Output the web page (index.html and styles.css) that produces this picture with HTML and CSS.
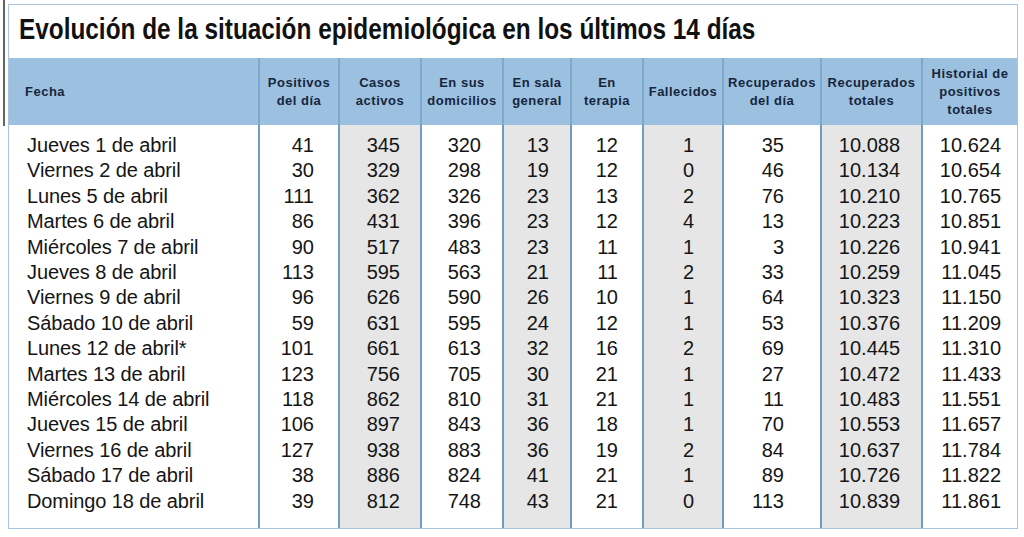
FILE: index.html
```html
<!DOCTYPE html>
<html lang="es">
<head>
<meta charset="utf-8">
<title>Evolución de la situación epidemiológica</title>
<link rel="stylesheet" href="styles.css">
</head>
<body>
<div class="page">
  <div class="edge"></div>
  <div class="card">
    <h1 class="title"><span class="title-text">Evolución de la situación epidemiológica en los últimos 14 días</span></h1>
    <table class="data">
      <colgroup>
        <col class="c-fecha">
        <col class="c-pos">
        <col class="c-casos shade">
        <col class="c-dom">
        <col class="c-sala shade">
        <col class="c-ter">
        <col class="c-fall shade">
        <col class="c-recd">
        <col class="c-rect shade">
        <col class="c-hist">
      </colgroup>
      <thead>
        <tr>
          <th class="h-fecha">Fecha</th>
          <th>Positivos<br>del día</th>
          <th>Casos<br>activos</th>
          <th>En sus<br>domicilios</th>
          <th>En sala<br>general</th>
          <th>En<br>terapia</th>
          <th>Fallecidos</th>
          <th>Recuperados<br>del día</th>
          <th>Recuperados<br>totales</th>
          <th>Historial de<br>positivos<br>totales</th>
        </tr>
      </thead>
      <tbody>
        <tr class="first"><td>Jueves 1 de abril</td><td>41</td><td>345</td><td>320</td><td>13</td><td>12</td><td>1</td><td>35</td><td>10.088</td><td>10.624</td></tr>
        <tr><td>Viernes 2 de abril</td><td>30</td><td>329</td><td>298</td><td>19</td><td>12</td><td>0</td><td>46</td><td>10.134</td><td>10.654</td></tr>
        <tr><td>Lunes 5 de abril</td><td>111</td><td>362</td><td>326</td><td>23</td><td>13</td><td>2</td><td>76</td><td>10.210</td><td>10.765</td></tr>
        <tr><td>Martes 6 de abril</td><td>86</td><td>431</td><td>396</td><td>23</td><td>12</td><td>4</td><td>13</td><td>10.223</td><td>10.851</td></tr>
        <tr><td>Miércoles 7 de abril</td><td>90</td><td>517</td><td>483</td><td>23</td><td>11</td><td>1</td><td>3</td><td>10.226</td><td>10.941</td></tr>
        <tr><td>Jueves 8 de abril</td><td>113</td><td>595</td><td>563</td><td>21</td><td>11</td><td>2</td><td>33</td><td>10.259</td><td>11.045</td></tr>
        <tr><td>Viernes 9 de abril</td><td>96</td><td>626</td><td>590</td><td>26</td><td>10</td><td>1</td><td>64</td><td>10.323</td><td>11.150</td></tr>
        <tr><td>Sábado 10 de abril</td><td>59</td><td>631</td><td>595</td><td>24</td><td>12</td><td>1</td><td>53</td><td>10.376</td><td>11.209</td></tr>
        <tr><td>Lunes 12 de abril*</td><td>101</td><td>661</td><td>613</td><td>32</td><td>16</td><td>2</td><td>69</td><td>10.445</td><td>11.310</td></tr>
        <tr><td>Martes 13 de abril</td><td>123</td><td>756</td><td>705</td><td>30</td><td>21</td><td>1</td><td>27</td><td>10.472</td><td>11.433</td></tr>
        <tr><td>Miércoles 14 de abril</td><td>118</td><td>862</td><td>810</td><td>31</td><td>21</td><td>1</td><td>11</td><td>10.483</td><td>11.551</td></tr>
        <tr><td>Jueves 15 de abril</td><td>106</td><td>897</td><td>843</td><td>36</td><td>18</td><td>1</td><td>70</td><td>10.553</td><td>11.657</td></tr>
        <tr><td>Viernes 16 de abril</td><td>127</td><td>938</td><td>883</td><td>36</td><td>19</td><td>2</td><td>84</td><td>10.637</td><td>11.784</td></tr>
        <tr><td>Sábado 17 de abril</td><td>38</td><td>886</td><td>824</td><td>41</td><td>21</td><td>1</td><td>89</td><td>10.726</td><td>11.822</td></tr>
        <tr class="last"><td>Domingo 18 de abril</td><td>39</td><td>812</td><td>748</td><td>43</td><td>21</td><td>0</td><td>113</td><td>10.839</td><td>11.861</td></tr>
      </tbody>
    </table>
  </div>
</div>
</body>
</html>
```

FILE: styles.css
```css
html, body {
  margin: 0;
  padding: 0;
  background: #ffffff;
}

.page {
  display: flex;
  align-items: flex-start;
  padding: 0 0 0 3px;
  width: 1024px;
  height: 537px;
  box-sizing: border-box;
}

.edge {
  width: 2px;
  height: 126px;
  background: #5f6468;
  flex: none;
}

.card {
  margin: 4px 0 0 3px;
  width: 1010px;
  border: 1px solid #a9c6de;
  box-sizing: border-box;
  background: #ffffff;
}

.title {
  margin: 0;
  height: 53px;
  padding: 7px 0 0 10px;
  box-sizing: border-box;
  font-family: "Liberation Sans", Arial, sans-serif;
  font-weight: bold;
  font-size: 29px;
  line-height: 34px;
  color: #111111;
  white-space: nowrap;
}

.title-text {
  display: inline-block;
  transform: scaleX(0.84);
  transform-origin: left center;
}

.data {
  border-collapse: collapse;
  table-layout: fixed;
  width: 1008px;
}

.c-fecha { width: 250px; }
.c-pos { width: 80px; }
.c-casos { width: 82px; }
.c-dom { width: 82px; }
.c-sala { width: 68px; }
.c-ter { width: 72px; }
.c-fall { width: 80px; }
.c-recd { width: 98px; }
.c-rect { width: 101px; }
.c-hist { width: 95px; }

.shade { background: #e6e6e6; }

.data th {
  background: #9cc0df;
  height: 67px;
  padding: 0 1px;
  font-family: "Liberation Sans", Arial, sans-serif;
  font-weight: bold;
  font-size: 13px;
  line-height: 18px;
  letter-spacing: 0.5px;
  color: #15263d;
  text-align: center;
  vertical-align: middle;
  border-left: 2px solid #7ea8cd;
  white-space: nowrap;
}

.data th:first-child {
  border-left: none;
}

.data th.h-fecha {
  text-align: left;
  padding-left: 16px;
}

.data td {
  font-family: "Liberation Sans", Arial, sans-serif;
  font-size: 20px;
  line-height: 25.4px;
  height: 25.4px;
  padding: 0;
  color: #151515;
  text-align: right;
  border-left: 2px solid #6f9bc4;
  white-space: nowrap;
}

.data td:first-child {
  border-left: none;
  text-align: left;
  padding-left: 18px;
  letter-spacing: -0.1px;
}

.data td:nth-child(2) { padding-right: 24px; }
.data td:nth-child(3) { padding-right: 20px; }
.data td:nth-child(4) { padding-right: 21px; }
.data td:nth-child(5) { padding-right: 21px; }
.data td:nth-child(6) { padding-right: 24px; }
.data td:nth-child(7) { padding-right: 28px; }
.data td:nth-child(8) { padding-right: 36px; }
.data td:nth-child(9) { padding-right: 21px; }
.data td:nth-child(10) { padding-right: 16px; }

.data tr.first td {
  padding-top: 8px;
}

.data tr.last td {
  padding-bottom: 14px;
}
```
